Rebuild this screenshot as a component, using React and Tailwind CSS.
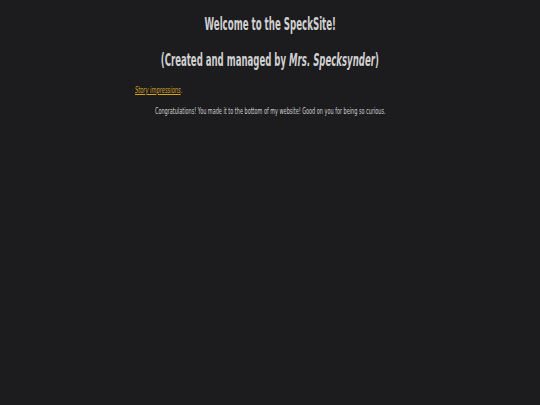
export default function App() {
  const font = { fontFamily: '"DejaVu Sans Condensed", sans-serif' };
  return (
    <div className="min-h-[405px] w-full bg-[#1c1c1e] text-[#d0d0d0]" style={font}>
      <div className="flex flex-col items-center pt-[13px]">
        <h1 className="w-max origin-center scale-x-[0.565] whitespace-nowrap text-[17px] font-bold leading-[22px]">
          Welcome to the SpeckSite!
        </h1>
        <h2 className="mt-[14px] w-max origin-center scale-x-[0.56] whitespace-nowrap text-[17px] font-bold leading-[22px]">
          (Created and managed by <i>Mrs. Specksynder</i>)
        </h2>
      </div>
      <div className="pl-[135px] pt-[14px]">
        <p className="w-max origin-left scale-x-[0.63] whitespace-nowrap text-[9px] leading-[10px] italic">
          <a className="text-[#d6a21e] underline">Story impressions</a>
          <span className="text-[#d6a21e]">.</span>
        </p>
        <p className="ml-[20px] mt-[11px] w-max origin-left scale-x-[0.61] whitespace-nowrap text-[9px] leading-[10px]">
          Congratulations! You made it to the bottom of my website! Good on you for being so curious.
        </p>
      </div>
    </div>
  );
}
